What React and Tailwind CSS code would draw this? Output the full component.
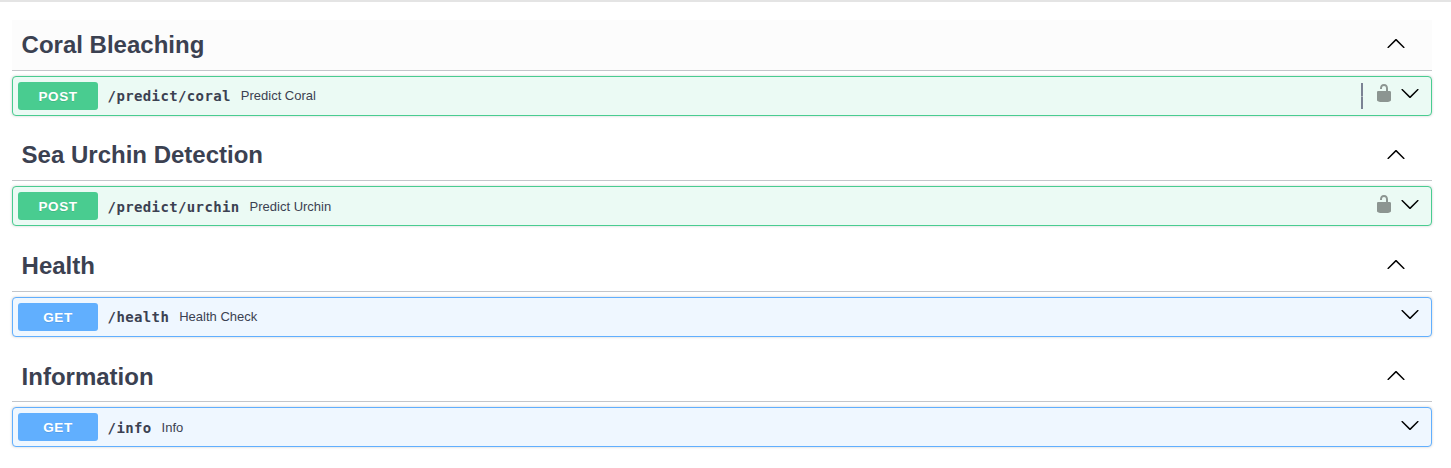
const SECTIONS = [
  { tag: "Coral Bleaching", method: "POST", path: "/predict/coral", summary: "Predict Coral", lock: true, focused: true },
  { tag: "Sea Urchin Detection", method: "POST", path: "/predict/urchin", summary: "Predict Urchin", lock: true },
  { tag: "Health", method: "GET", path: "/health", summary: "Health Check" },
  { tag: "Information", method: "GET", path: "/info", summary: "Info" },
];

const STYLES = {
  POST: { row: "border-[#49cc90] bg-[#ebfaf4]", badge: "bg-[#49cc90]" },
  GET: { row: "border-[#61affe] bg-[#eff7ff]", badge: "bg-[#61affe]" },
};

function Chevron({ up }) {
  return (
    <svg viewBox="0 0 20 20" className="size-5 shrink-0" aria-hidden="true">
      <path
        d={
          up
            ? "M 17.418 14.908 C 17.69 15.176 18.127 15.176 18.397 14.908 C 18.667 14.64 18.668 14.207 18.397 13.939 L 10.489 6.109 C 10.219 5.841 9.782 5.841 9.51 6.109 L 1.602 13.939 C 1.332 14.207 1.332 14.64 1.602 14.908 C 1.873 15.176 2.311 15.176 2.581 14.908 L 10 7.767 L 17.418 14.908 Z"
            : "M17.418 6.109c.272-.268.709-.268.979 0s.271.701 0 .969l-7.908 7.83c-.27.268-.707.268-.979 0l-7.908-7.83c-.27-.268-.27-.701 0-.969.271-.268.709-.268.979 0L10 13.25l7.418-7.141z"
        }
      />
    </svg>
  );
}

function Unlocked() {
  return (
    <svg viewBox="0 0 20 20" className="size-5 shrink-0 opacity-40" aria-hidden="true">
      <path d="M15.8 8H14V5.6C14 2.703 12.665 1 10 1 7.334 1 6 2.703 6 5.6V6h2v-.801C8 3.754 8.797 3 10 3c1.203 0 2 .754 2 2.199V8H4c-.553 0-1 .646-1 1.199V17c0 .549.428 1.139.951 1.307l1.197.387C5.672 18.861 6.55 19 7.1 19h5.8c.549 0 1.428-.139 1.951-.307l1.196-.387c.524-.167.953-.757.953-1.306V9.199C17 8.646 16.352 8 15.8 8z" />
    </svg>
  );
}

function Section({ tag, method, path, summary, lock, focused }) {
  const s = STYLES[method];
  return (
    <section className="h-[110.55px]">
      <h3 className={`flex h-[51px] items-center border-b border-[#c4c6ca] pr-[26px] pl-[9.6px] ${focused ? "bg-[#fcfcfc]" : ""}`}>
        <span className="flex-1 pt-[0.4px] text-2xl leading-[30px] font-bold text-[#3b4151]">{tag}</span>
        <span className="flex pb-[2.6px]">
          <Chevron up />
        </span>
      </h3>
      <div className={`mt-[5px] flex h-10 items-center rounded border px-[5px] shadow-[0_0_3px_rgba(0,0,0,0.19)] ${s.row}`}>
        <span className={`h-7 w-20 rounded-[3px] text-center text-[13.5px] leading-[29px] font-bold tracking-[0.6px] text-white [text-shadow:0_1px_0_rgba(0,0,0,0.1)] ${s.badge}`}>
          {method}
        </span>
        <span className="pt-[0.8px] pl-[9.6px] font-['DejaVu_Sans_Mono',monospace] text-[14px] leading-5 font-bold tracking-[0.37px] text-[#3b4151]">
          {path}
        </span>
        <span className="flex-1 pt-[0.8px] pl-2.5 text-[13px] leading-5 text-[#3b4151]">{summary}</span>
        {focused && (
          <span className="mr-[11px] flex flex-col bg-[#a6afb8]">
            <span className="h-[13px] w-0.5 bg-[#7b8294]" />
            <span className="h-px w-0.5" />
            <span className="h-3 w-0.5 bg-[#7b8294]" />
          </span>
        )}
        {lock && (
          <span className="flex pb-[5px]">
            <Unlocked />
          </span>
        )}
        <span className="mr-1.5 ml-1.5 flex pb-[4.6px]">
          <Chevron />
        </span>
      </div>
    </section>
  );
}

export default function App() {
  return (
    <main className="h-[468px] overflow-hidden border-t-2 border-[#e4e4e4] bg-white pt-[17.7px] pr-[19px] pl-3 font-['Liberation_Sans',Arial,sans-serif]">
      {SECTIONS.map((s) => (
        <Section key={s.tag} {...s} />
      ))}
    </main>
  );
}
